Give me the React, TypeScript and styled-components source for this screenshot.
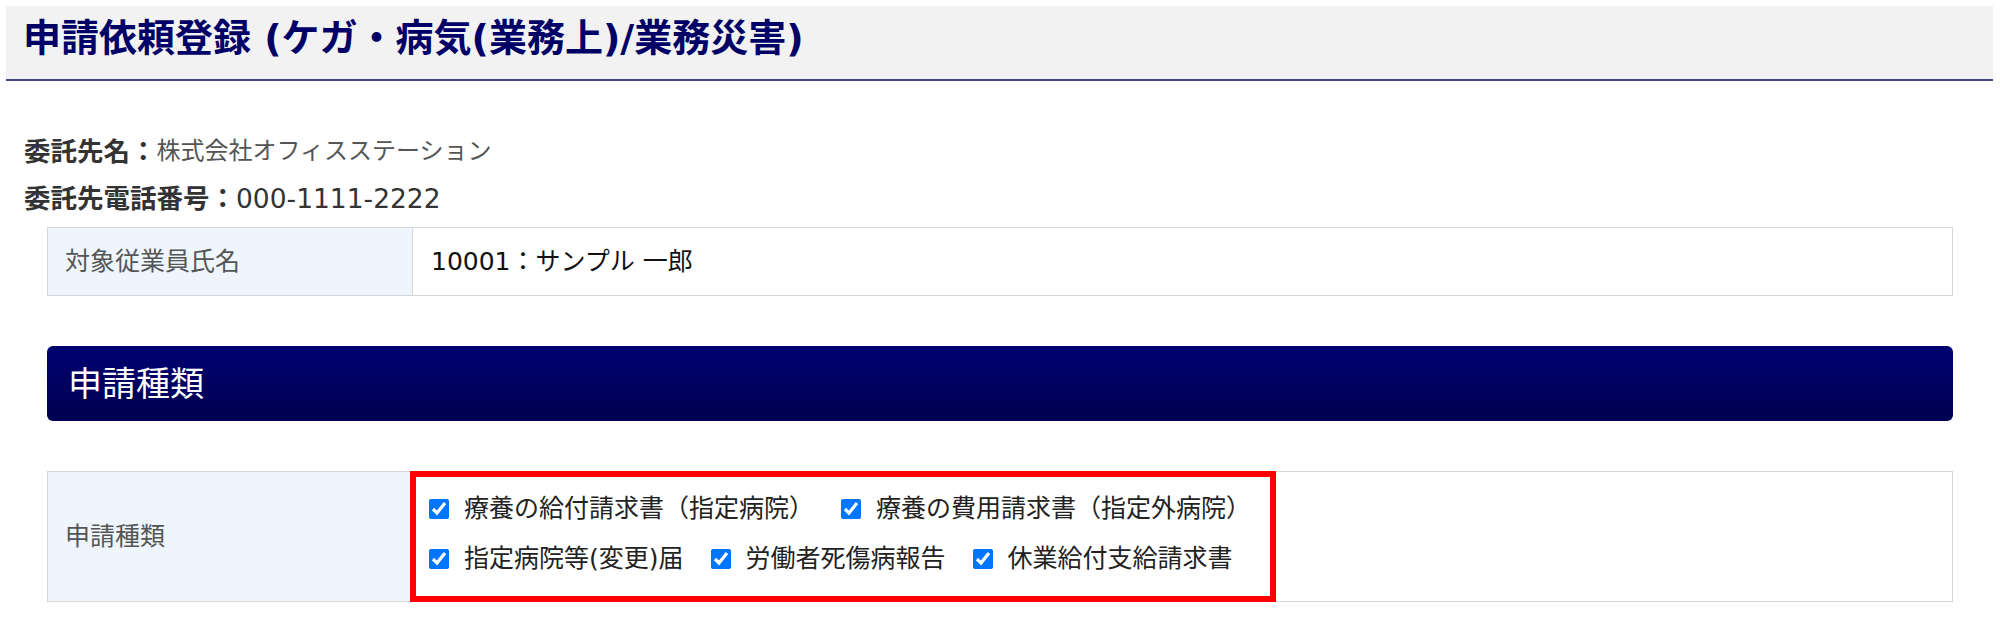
import { FC } from "react";
import styled, { createGlobalStyle } from "styled-components";

const GlobalStyle = createGlobalStyle`
  *, *::before, *::after {
    box-sizing: border-box;
  }
  body {
    margin: 0;
    background: #fff;
    font-family: "DejaVu Sans", "Noto Sans CJK JP", sans-serif;
    color: #333;
  }
`;

const Page = styled.div`
  padding: 6px 7px 0 6px;
`;

const PageHeader = styled.header`
  height: 75px;
  display: flex;
  align-items: center;
  padding: 0 0 7px 17px;
  background: #f2f2f2;
  border-bottom: 2px solid #45458e;
`;

const Title = styled.h1`
  margin: 0;
  font-size: 38px;
  line-height: 1.2;
  font-weight: bold;
  color: #000066;
`;

const Main = styled.main`
  padding: 0 40px 0 18px;
`;

const InfoList = styled.div`
  margin-top: 47px;
`;

const InfoRow = styled.div`
  height: 47px;
  display: flex;
  align-items: center;
  font-size: 26.5px;
  line-height: 1.2;
  color: #333;
  white-space: nowrap;
  strong {
    font-weight: bold;
  }
`;

const InfoSub = styled.span`
  font-size: 24px;
  color: #555;
`;

const Block = styled.div<{ $gap: number }>`
  margin: ${(p) => p.$gap}px 0 0 23px;
`;

const FormTable = styled.div<{ $rowHeight?: number }>`
  display: grid;
  grid-template-columns: 365px 1fr;
  grid-auto-rows: ${(p) => (p.$rowHeight ? `${p.$rowHeight}px` : "auto")};
  border: 1px solid #d6d6d6;
`;

const LabelCell = styled.div<{ $shift: number }>`
  display: flex;
  align-items: center;
  padding: 0 0 ${(p) => p.$shift}px 17px;
  background: #eef5fc;
  border-right: 1px solid #d6d6d6;
  font-size: 25px;
  color: #555;
`;

const ValueCell = styled.div`
  display: flex;
  align-items: center;
  padding: 0 0 6px 18px;
  font-size: 25px;
  color: #111;
`;

const ChoiceCell = styled.div`
  display: flex;
  align-items: stretch;
`;

const Highlight = styled.div`
  width: fit-content;
  margin: -1px 0 -1px -3px;
  padding: 13px 19px 18px 13px;
  border: 6px solid #ff0000;
  display: flex;
  flex-direction: column;
  gap: 13.5px;
`;

const ChoiceRow = styled.div`
  display: flex;
  gap: 27px;
`;

const Choice = styled.label`
  display: flex;
  align-items: center;
  gap: 15px;
  height: 37px;
  font-size: 25px;
  line-height: 1.2;
  color: #222;
  white-space: nowrap;
  input {
    width: 20px;
    height: 20px;
    margin: 0;
    accent-color: #0075ff;
  }
`;

const SectionBar = styled.h2`
  margin: 0;
  height: 75px;
  display: flex;
  align-items: center;
  padding: 0 0 5px 21px;
  border-radius: 6px;
  background: linear-gradient(#000070, #000052);
  color: #fff;
  font-size: 34px;
  font-weight: normal;
`;

const rows: string[][] = [
  ["療養の給付請求書（指定病院）", "療養の費用請求書（指定外病院）"],
  ["指定病院等(変更)届", "労働者死傷病報告", "休業給付支給請求書"],
];

const App: FC = () => {
  return (
    <Page>
      <GlobalStyle />
      <PageHeader>
        <Title>申請依頼登録 (ケガ・病気(業務上)/業務災害)</Title>
      </PageHeader>
      <Main>
        <InfoList>
          <InfoRow>
            <strong>委託先名：</strong>
            <InfoSub>株式会社オフィスステーション</InfoSub>
          </InfoRow>
          <InfoRow>
            <strong>委託先電話番号：</strong>000-1111-2222
          </InfoRow>
        </InfoList>

        <Block $gap={5}>
          <FormTable $rowHeight={67}>
            <LabelCell $shift={6}>対象従業員氏名</LabelCell>
            <ValueCell>10001：サンプル 一郎</ValueCell>
          </FormTable>
        </Block>

        <Block $gap={50}>
          <SectionBar>申請種類</SectionBar>
        </Block>

        <Block $gap={50}>
          <FormTable>
            <LabelCell $shift={5}>申請種類</LabelCell>
            <ChoiceCell>
              <Highlight>
                {rows.map((row, i) => (
                  <ChoiceRow key={i}>
                    {row.map((name) => (
                      <Choice key={name}>
                        <input type="checkbox" defaultChecked />
                        {name}
                      </Choice>
                    ))}
                  </ChoiceRow>
                ))}
              </Highlight>
            </ChoiceCell>
          </FormTable>
        </Block>
      </Main>
    </Page>
  );
};

export default App;
